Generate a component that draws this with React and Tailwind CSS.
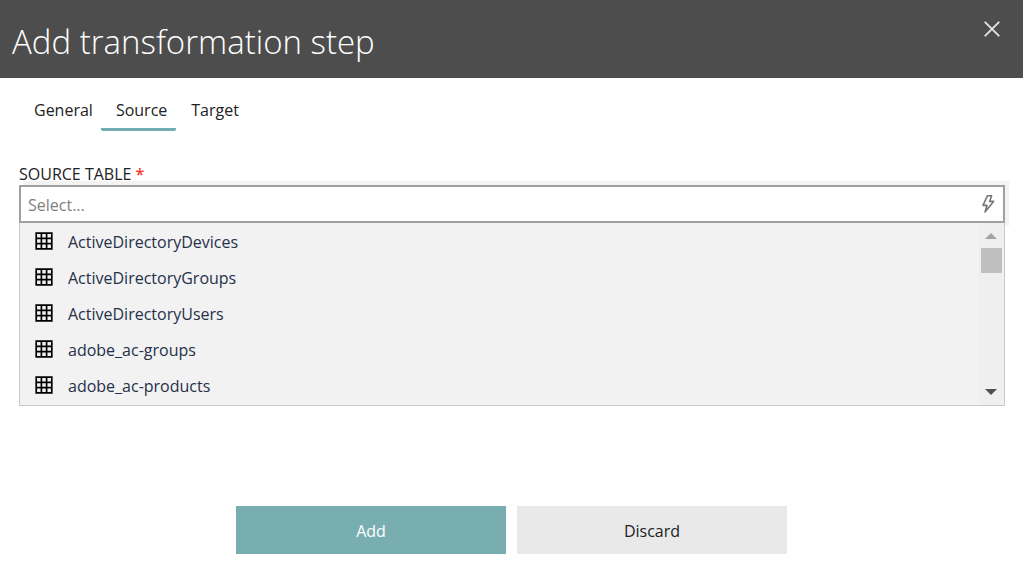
const tables = [
  "ActiveDirectoryDevices",
  "ActiveDirectoryGroups",
  "ActiveDirectoryUsers",
  "adobe_ac-groups",
  "adobe_ac-products",
];

function TableIcon() {
  return (
    <svg width="18" height="18" viewBox="0 0 18 18" fill="none" stroke="#000" strokeWidth="1.7" aria-hidden="true">
      <path d="M1.2 1.2H16.8V16.8H1.2ZM1.2 6.4H16.8M1.2 11.6H16.8M6.4 1.2V16.8M11.6 1.2V16.8" />
    </svg>
  );
}

function BoltIcon() {
  return (
    <svg width="14" height="20" viewBox="0 0 14 20" fill="none" stroke="#777" strokeWidth="1.6" strokeLinejoin="round" aria-hidden="true">
      <path d="M6.4 1.8H10.6L8.6 7.4H12.6L4 18L6 11.4H2Z" />
    </svg>
  );
}

function Tab({ label, selected }) {
  return (
    <button
      type="button"
      role="tab"
      aria-selected={selected}
      className={
        selected
          ? "h-10 rounded-b-xs border-b-3 border-[#72adb0] pr-[9px] pl-[15px] pt-px"
          : "h-10 border-b-3 border-transparent pr-2 pl-[15px] pt-px"
      }
    >
      {label}
    </button>
  );
}

export default function App() {
  return (
    <div className="min-h-screen bg-white font-['Open_Sans','Noto_Sans',sans-serif] text-base leading-6 text-[#222]">
      <header className="flex h-[78px] items-start justify-between bg-[#4d4d4d] pl-3 pr-[21px] text-white">
        <h1 className="pt-[18px] text-[33px] leading-[48px] font-light">Add transformation step</h1>
        <button type="button" aria-label="Close" className="mt-[19px] p-0.5">
          <svg width="16" height="16" viewBox="0 0 16 16" fill="none" stroke="#e4e4e4" strokeWidth="1.9" strokeLinecap="round" aria-hidden="true">
            <path d="M1.3 1.3L14.7 14.7M14.7 1.3L1.3 14.7" />
          </svg>
        </button>
      </header>

      <main className="pl-[19px] pr-[18px] pt-[13px]">
        <div role="tablist" className="flex">
          <Tab label="General" />
          <Tab label="Source" selected />
          <Tab label="Target" />
        </div>

        <label htmlFor="source-table" className="mt-8 block leading-[22px]">
          SOURCE TABLE <span className="font-semibold text-[#f03a2a]">*</span>
        </label>
        <div className="flex h-[38px] items-center border-2 border-[#a0a0a0] bg-white pr-2 shadow-[4px_-4px_0_0_#f3f3f3,4px_3px_0_0_#f3f3f3]">
          <input
            id="source-table"
            type="text"
            placeholder="Select..."
            className="min-w-0 flex-1 bg-transparent pt-0.5 pl-[7px] outline-none placeholder:text-[#808080]"
          />
          <button type="button" aria-label="Insert expression">
            <BoltIcon />
          </button>
        </div>
        <div className="relative flex border-x border-b border-[#c8c8c8] bg-[#f2f2f2] pb-0.5 pr-px">
          <ul className="flex-1">
            {tables.map((name) => (
              <li key={name}>
                <button type="button" className="flex h-9 w-full items-center gap-[15px] pl-[15px] text-[#25304a]">
                  <TableIcon />
                  <span className="pt-0.5">{name}</span>
                </button>
              </li>
            ))}
          </ul>
          <div className="-mb-0.5 flex w-6 flex-col items-center bg-[#efefef] py-[10px]" aria-hidden="true">
            <svg width="12" height="6" viewBox="0 0 12 6" fill="#a3a3a3">
              <path d="M6 0L12 6H0Z" />
            </svg>
            <div className="mt-[9px] h-[25px] w-[21px] bg-[#bfbfbf]" />
            <svg className="mt-auto" width="12" height="6" viewBox="0 0 12 6" fill="#505050">
              <path d="M0 0H12L6 6Z" />
            </svg>
          </div>
        </div>
      </main>

      <footer className="flex justify-center gap-[11px] pt-[100px]">
        <button type="button" className="h-12 w-[270px] bg-[#78aeb0] pt-0.5 text-white">
          Add
        </button>
        <button type="button" className="h-12 w-[270px] bg-[#e9e9e9] pt-0.5">
          Discard
        </button>
      </footer>
    </div>
  );
}
